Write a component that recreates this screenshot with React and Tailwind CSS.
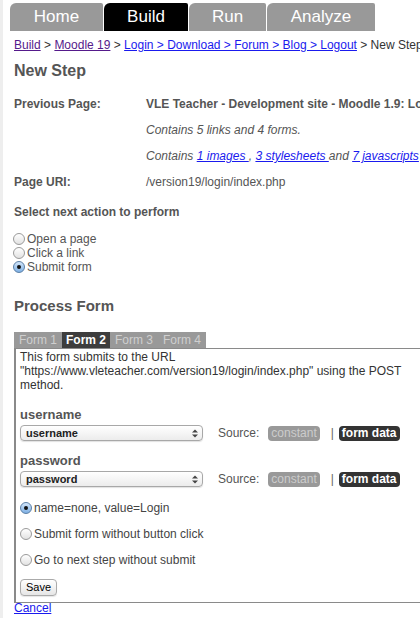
import React from "react";

const Radio = ({ checked }) => (
  <span
    className={
      "w-[12px] h-[12px] shrink-0 rounded-full border flex items-center justify-center bg-linear-to-b " +
      (checked
        ? "border-[#5b7fa6] from-[#d3e6fa] to-[#7eb0e4]"
        : "border-[#9a9a9a] from-white to-[#e2e2e2]")
    }
  >
    {checked && <span className="w-[4px] h-[4px] rounded-full bg-[#111]" />}
  </span>
);

const Select = ({ value }) => (
  <div className="w-[183px] h-[16px] rounded-[4px] border border-[#a8a8a8] bg-linear-to-b from-white to-[#ececec] flex items-center justify-between pl-[5px] pr-[4px] shadow-[0_1px_1px_rgba(0,0,0,0.12)]">
    <span className="text-[11px] font-bold text-[#222] leading-none">{value}</span>
    <svg width="6" height="9" viewBox="0 0 6 9">
      <path d="M0 3.5 L3 0.5 L6 3.5 Z" fill="#444" />
      <path d="M0 5.5 L3 8.5 L6 5.5 Z" fill="#444" />
    </svg>
  </div>
);

const FieldRow = ({ label, value, first }) => (
  <>
    <div className={"font-bold text-[#555] text-[13px] leading-[14px] " + (first ? "mt-[16px]" : "mt-[13px]")}>
      {label}
    </div>
    <div className="mt-[3px] flex items-center h-[16px]">
      <Select value={value} />
      <span className="ml-[15px] text-[#555]">Source:</span>
      <span className="ml-[9px] h-[15px] px-[3px] rounded-[4px] bg-[#999] text-[#ccc] flex items-center leading-none">
        constant
      </span>
      <span className="ml-[11px] text-[#666]">|</span>
      <span className="ml-[5px] h-[15px] px-[3px] rounded-[4px] bg-[#333] text-white font-bold flex items-center leading-none">
        form data
      </span>
    </div>
  </>
);

export default function App() {
  const tabs = [
    { name: "Home", w: "w-[93px]" },
    { name: "Build", w: "w-[84px]", active: true },
    { name: "Run", w: "w-[77px]" },
    { name: "Analyze", w: "w-[108px]" },
  ];
  const formTabs = ["Form 1", "Form 2", "Form 3", "Form 4"];

  return (
    <div className="w-[420px] h-[618px] overflow-hidden flex bg-white text-[12px] text-[#555] font-['Liberation_Sans',Arial,sans-serif]">
      <div className="w-[3px] shrink-0 bg-[#eeeeee]" />
      <div className="w-[640px] shrink-0 pl-[7px]">
        {/* main tabs */}
        <div className="flex gap-px mt-[3px] h-[28px]">
          {tabs.map((t) => (
            <div
              key={t.name}
              className={
                t.w +
                " rounded-tl-[6px] rounded-tr-[2px] flex items-center justify-center text-[17px] text-white " +
                (t.active ? "bg-black" : "bg-[#999]")
              }
            >
              {t.name}
            </div>
          ))}
        </div>

        <div className="pl-[4px]">
          {/* breadcrumb */}
          <div className="mt-[6px] leading-[16px] whitespace-nowrap text-[#333]">
            <a className="text-[#551a8b] underline">Build</a>
            {" > "}
            <a className="text-[#551a8b] underline">Moodle 19</a>
            {" > "}
            <a className="text-[#1a1aee] underline">Login &gt; Download &gt; Forum &gt; Blog &gt; Logout</a>
            {" > New Step"}
          </div>

          <h1 className="mt-[8px] text-[16px] font-bold leading-[20px] text-[#555]">New Step</h1>

          {/* details */}
          <div className="mt-[15px] grid grid-cols-[132px_1fr] auto-rows-[26px] leading-[16px] whitespace-nowrap">
            <div className="font-bold">Previous Page:</div>
            <div className="font-bold">VLE Teacher - Development site - Moodle 1.9: Login to the site</div>
            <div />
            <div className="italic">Contains 5 links and 4 forms.</div>
            <div />
            <div className="italic">
              Contains <a className="text-[#1a1aee] underline">1 images </a>,{" "}
              <a className="text-[#1a1aee] underline">3 stylesheets </a>and{" "}
              <a className="text-[#1a1aee] underline">7 javascripts</a>
            </div>
            <div className="font-bold">Page URI:</div>
            <div>/version19/login/index.php</div>
          </div>

          <div className="mt-[4px] font-bold leading-[16px]">Select next action to perform</div>

          <div className="mt-[12px] flex flex-col">
            {["Open a page", "Click a link", "Submit form"].map((l, i) => (
              <div key={l} className="flex items-center gap-[2px] h-[14px] -ml-[1px]">
                <Radio checked={i === 2} />
                <span>{l}</span>
              </div>
            ))}
          </div>

          <h2 className="mt-[22px] text-[15px] font-bold leading-[20px] text-[#555]">Process Form</h2>

          {/* form tabs */}
          <div className="mt-[16px] flex h-[16px]">
            {formTabs.map((f, i) => (
              <div
                key={f}
                className={
                  "w-[48px] flex items-center justify-center " +
                  (i === 1 ? "bg-[#3d3d3d] text-white font-bold" : "bg-[#999] text-[#cfcfcf]")
                }
              >
                {f}
              </div>
            ))}
          </div>

          <div className="border border-[#8a8a8a] border-l-2 pl-[4px] pt-[1px] pb-[6px] text-[#333]">
            <p className="leading-[14px] w-[392px]">
              This form submits to the URL
              <br />
              "https://www.vleteacher.com/version19/login/index.php" using the POST
              <br />
              method.
            </p>

            <FieldRow label="username" value="username" first />
            <FieldRow label="password" value="password" />

            <div className="mt-[13px] flex flex-col gap-[10px]">
              {["name=none, value=Login", "Submit form without button click", "Go to next step without submit"].map(
                (l, i) => (
                  <div key={l} className="flex items-center gap-[2px] h-[16px]">
                    <Radio checked={i === 0} />
                    <span className="text-[#444]">{l}</span>
                  </div>
                )
              )}
            </div>

            <button className="mt-[11px] h-[17px] px-[5px] rounded-[4px] border border-[#aaa] bg-linear-to-b from-white to-[#e6e6e6] text-[11px] text-black leading-none shadow-[0_1px_1px_rgba(0,0,0,0.1)]">
              Save
            </button>
          </div>

          <a className="block leading-[14px] -mt-[2px] text-[#1a1aee] underline text-[12px]">Cancel</a>
        </div>
      </div>
    </div>
  );
}
